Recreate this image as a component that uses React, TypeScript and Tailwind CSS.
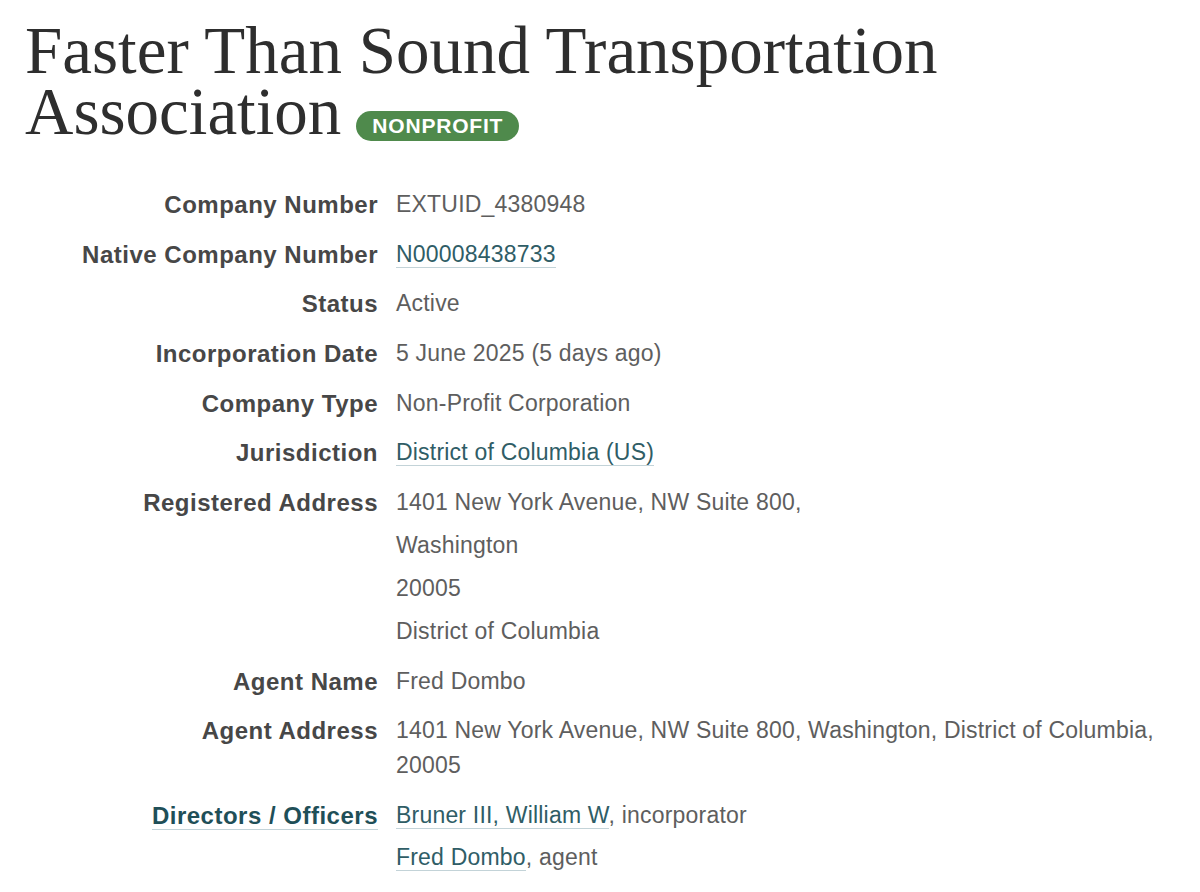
import React from "react";

const sans = { fontFamily: '"Liberation Sans", Arial, sans-serif' };

function Link({ children }: { children: React.ReactNode }) {
  return (
    <a className="text-[#2f5d66] border-b border-[#c3d3d8]" href="#">
      {children}
    </a>
  );
}

function Row({ label, children, labelLink }: { label: string; children: React.ReactNode; labelLink?: boolean }) {
  return (
    <>
      <dt className="text-right font-bold text-[24px] leading-[35px] tracking-[0.5px] text-[#474747]">
        {labelLink ? (
          <span className="text-[#1f4f58] border-b border-[#c3d3d8]">{label}</span>
        ) : (
          label
        )}
      </dt>
      <dd className="text-[23px] leading-[35px] tracking-[0.2px] text-[#5e5e5e]">{children}</dd>
    </>
  );
}

export default function App() {
  return (
    <div className="bg-white min-h-[892px] w-[1200px] pl-[25px] pr-[22px] pt-[20px]" style={sans}>
      <h1
        className="text-[67px] leading-[61px] text-[#2e2e2e] font-normal"
        style={{ fontFamily: '"Liberation Serif", "Times New Roman", serif' }}
      >
        Faster Than Sound Transportation
        <br />
        Association
        <span
          className="inline-block ml-[15px] px-[16px] h-[30px] leading-[30px] rounded-full bg-[#4f8a4c] text-white font-bold text-[21px] tracking-[0.8px] align-[1px]"
          style={sans}
        >
          NONPROFIT
        </span>
      </h1>
      <dl className="grid grid-cols-[353px_1fr] gap-x-[18px] gap-y-[14.67px] mt-[45px]">
        <Row label="Company Number">EXTUID_4380948</Row>
        <Row label="Native Company Number">
          <Link>N00008438733</Link>
        </Row>
        <Row label="Status">Active</Row>
        <Row label="Incorporation Date">5 June 2025 (5 days ago)</Row>
        <Row label="Company Type">Non-Profit Corporation</Row>
        <Row label="Jurisdiction">
          <Link>District of Columbia (US)</Link>
        </Row>
        <Row label="Registered Address">
          <div className="flex flex-col gap-[8px]">
            <div>1401 New York Avenue, NW Suite 800,</div>
            <div>Washington</div>
            <div>20005</div>
            <div>District of Columbia</div>
          </div>
        </Row>
        <Row label="Agent Name">Fred Dombo</Row>
        <Row label="Agent Address">
          1401 New York Avenue, NW Suite 800, Washington, District of Columbia, 20005
        </Row>
        <Row label="Directors / Officers" labelLink>
          <div className="flex flex-col gap-[7px]">
            <div>
              <Link>Bruner III, William W</Link>, incorporator
            </div>
            <div>
              <Link>Fred Dombo</Link>, agent
            </div>
          </div>
        </Row>
      </dl>
    </div>
  );
}
